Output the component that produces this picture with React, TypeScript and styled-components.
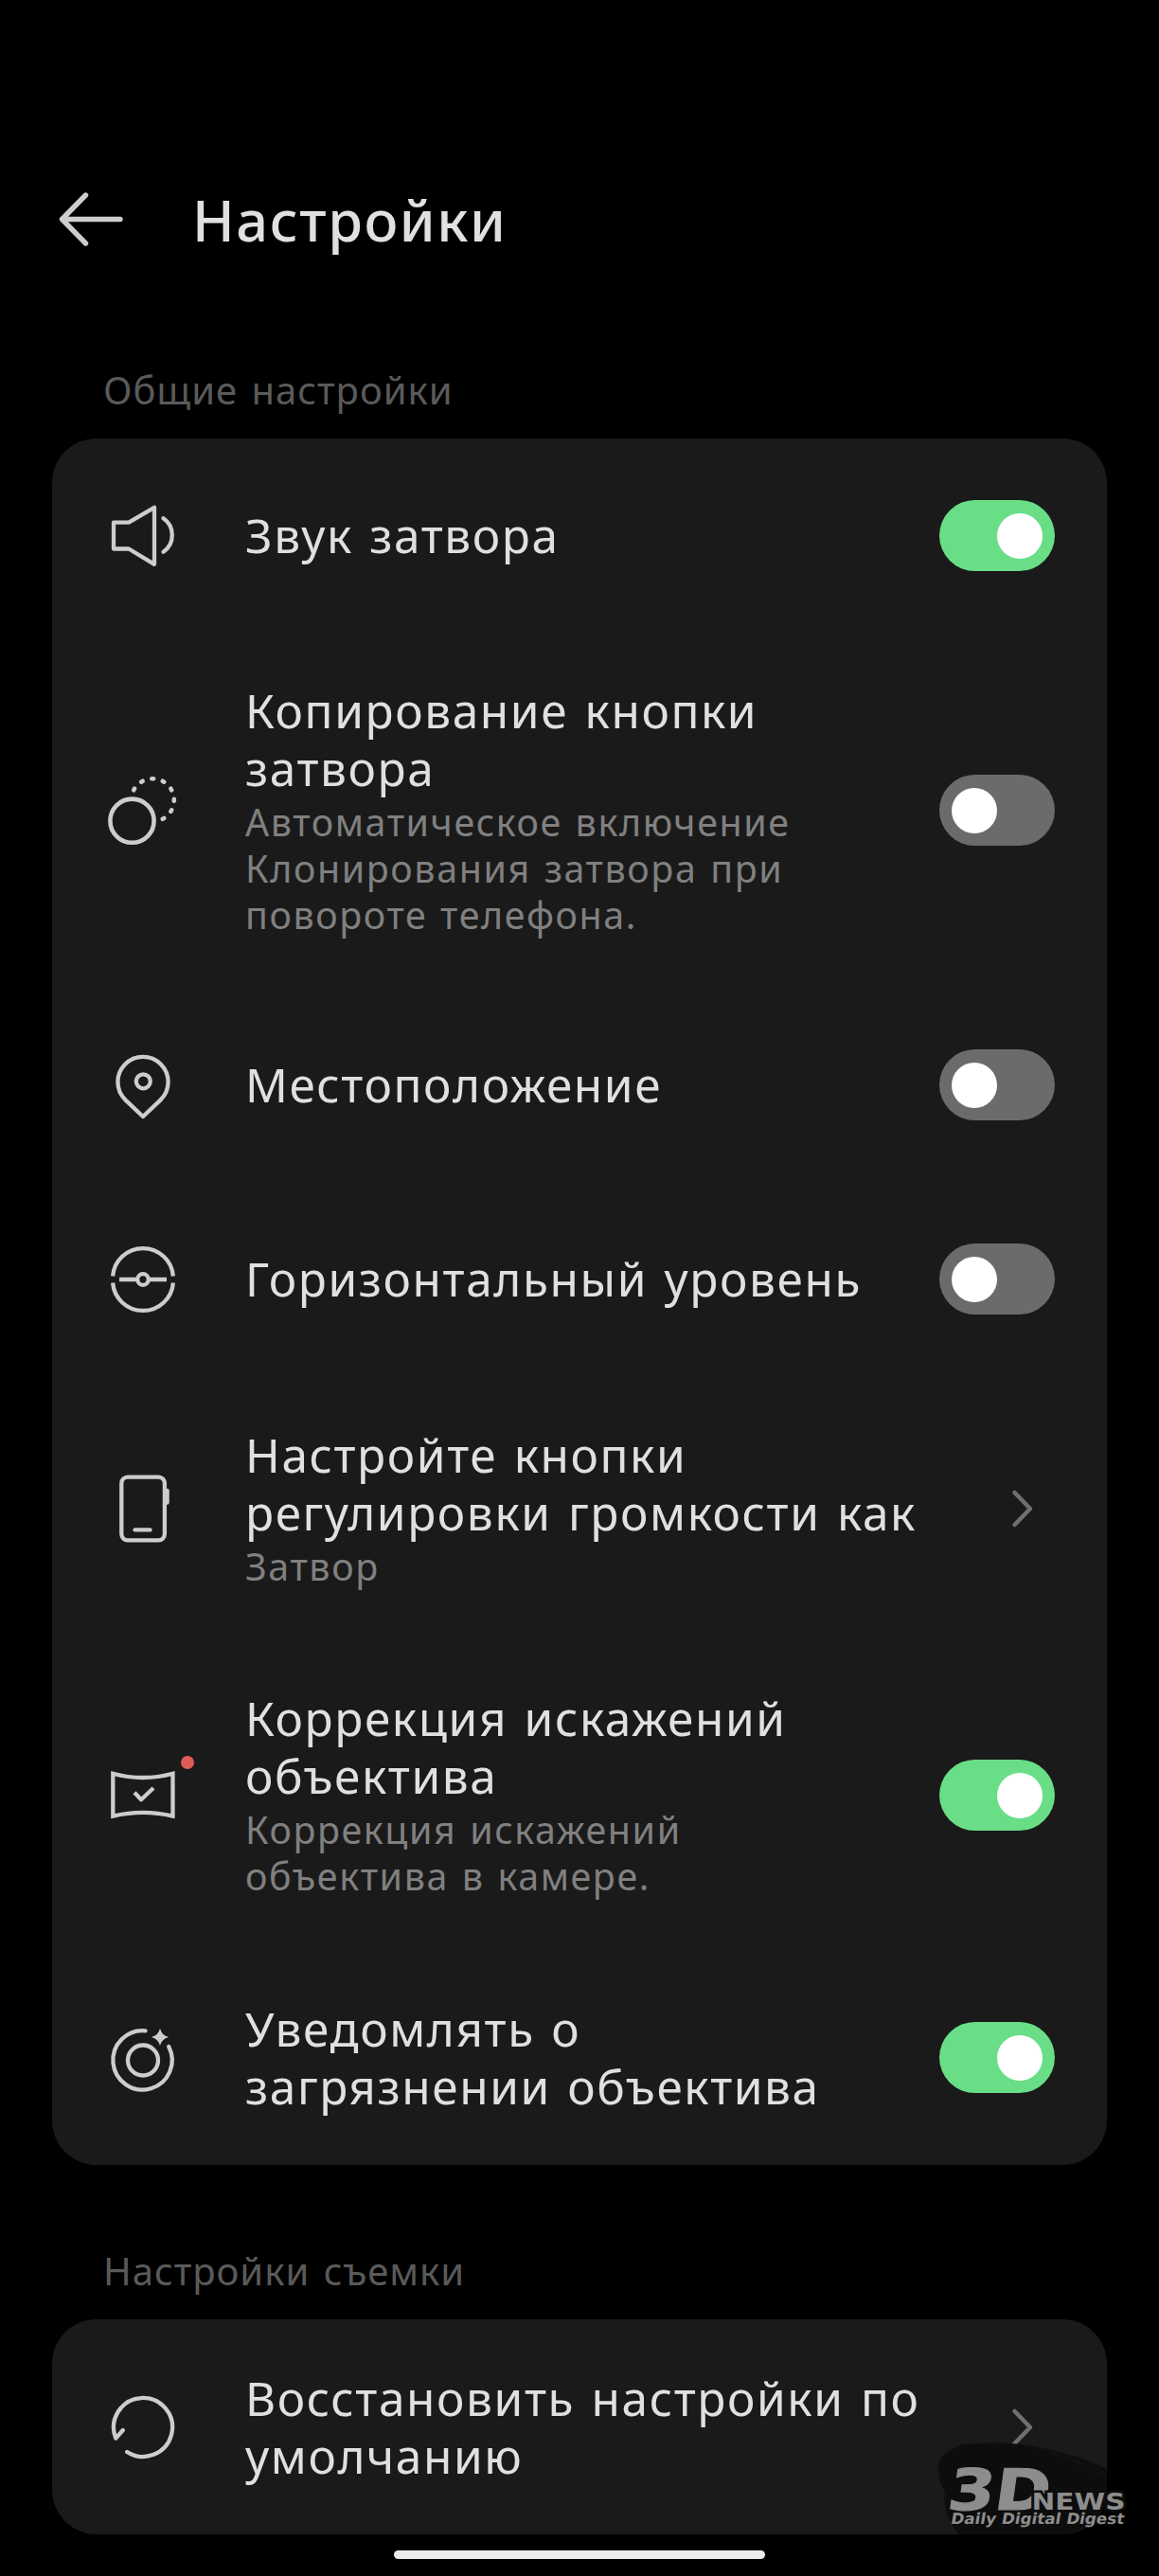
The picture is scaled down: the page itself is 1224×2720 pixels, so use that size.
import React, { useState } from 'react';
import styled, { createGlobalStyle } from 'styled-components';

const GlobalStyle = createGlobalStyle`
  *, *::before, *::after { box-sizing: border-box; }
  html, body { margin: 0; background: #000; }
`;

const Screen = styled.div`
  position: relative;
  width: 1224px;
  height: 2720px;
  overflow: hidden;
  display: flex;
  flex-direction: column;
  padding: 180px 55px 0;
  background: #000;
  color: #e0e0e0;
  font-family: 'Noto Sans', 'Open Sans', sans-serif;
`;

const Header = styled.header`
  display: flex;
  align-items: center;
  gap: 68px;
  height: 104px;
`;

const BackButton = styled.button`
  display: block;
  width: 80px;
  height: 80px;
  padding: 0;
  border: 0;
  background: none;
`;

const Title = styled.h1`
  margin: 0;
  font-size: 59.5px;
  line-height: 80px;
  font-weight: 500;
  letter-spacing: 1.6px;
`;

const SectionLabel = styled.h2<{ $top: number }>`
  margin: ${(p) => p.$top}px 0 24px;
  padding-left: 54px;
  font-size: 40px;
  line-height: 54px;
  font-weight: 400;
  letter-spacing: 1px;
  word-spacing: 3px;
  color: #5a5a5a;
`;

const Card = styled.section`
  display: flex;
  flex-direction: column;
  border-radius: 47px;
  background: #1a1a1a;
`;

const Row = styled.div<{ $height: number }>`
  display: flex;
  align-items: center;
  height: ${(p) => p.$height}px;
  padding: 0 55px 0 59px;
`;

const IconSlot = styled.div`
  position: relative;
  flex: none;
  width: 72px;
  height: 72px;
  margin-right: 73px;
`;

const IconSvg = styled.svg`
  display: block;
  width: 72px;
  height: 72px;
  fill: none;
  stroke: #cdcdcd;
  stroke-width: 4.3;
  stroke-linecap: round;
  stroke-linejoin: round;
`;

const NewDot = styled.span`
  position: absolute;
  top: -6px;
  left: 77px;
  width: 14px;
  height: 14px;
  border-radius: 50%;
  background: #de5b56;
`;

const Texts = styled.div`
  flex: 1;
  min-width: 0;
  white-space: nowrap;
`;

const RowTitle = styled.div`
  font-size: 49.5px;
  line-height: 61px;
  letter-spacing: 1.6px;
  word-spacing: 3px;
`;

const RowNote = styled.div`
  padding: 2px 0 1px;
  font-size: 39.4px;
  line-height: 49px;
  letter-spacing: 1.6px;
  word-spacing: 2px;
  color: #808080;
`;

const Line = styled.span`
  display: block;
`;

const Toggle = styled.button<{ $on: boolean }>`
  flex: none;
  display: flex;
  align-items: center;
  justify-content: ${(p) => (p.$on ? 'flex-end' : 'flex-start')};
  width: 122px;
  height: 75px;
  padding: 0 13px;
  border: 0;
  border-radius: 38px;
  background: ${(p) => (p.$on ? '#69de86' : '#6b6b6b')};
`;

const Knob = styled.span`
  width: 48px;
  height: 48px;
  border-radius: 50%;
  background: #fff;
`;

const Chevron = styled.svg`
  flex: none;
  width: 24px;
  height: 44px;
  margin-right: 22px;
  fill: none;
  stroke: #6f6f6f;
  stroke-width: 4.5;
  stroke-linecap: round;
  stroke-linejoin: round;
`;

const HomeBar = styled.div`
  align-self: center;
  width: 392px;
  height: 9px;
  margin-top: 17px;
  border-radius: 5px;
  background: #ebebeb;
`;

const Watermark = styled.svg`
  position: absolute;
  left: 984px;
  top: 2572px;
  width: 240px;
  height: 110px;
`;

const BackArrow = () => (
  <svg width="80" height="80" viewBox="0 0 80 80" fill="none" stroke="#cdcdcd" strokeWidth="5.4" strokeLinecap="round" strokeLinejoin="round">
    <path d="M35.5 14 L10.5 39.5 L35.5 65 M10.5 39.5 H72" />
  </svg>
);

const Icon = ({ children }: { children: React.ReactNode }) => (
  <IconSvg viewBox="-36 -36 72 72" overflow="visible">{children}</IconSvg>
);

const icons = {
  sound: (
    <Icon>
      <path d="M-30 -14.3 H-14 L13 -30.2 V29.8 L-14 13.5 H-30 Z" />
      <path d="M22.5 -18.7 A21.5 21.5 0 0 1 22.5 16.7" />
    </Icon>
  ),
  clone: (
    <Icon>
      <circle cx="-10.5" cy="10.7" r="23.1" strokeWidth="4.6" />
      {[-150, -120, -90, -60, -30, 0, 30, 60].map((deg) => (
        <path key={deg} d="M22.6 -0.9 V0.9" transform={`translate(11.2 -11.2) rotate(${deg})`} strokeWidth="4.6" />
      ))}
    </Icon>
  ),
  pin: (
    <Icon>
      <path d="M1 33 L-17.6 15.4 A26.6 26.6 0 1 1 19.6 15.4 Z" />
      <circle cx="1.3" cy="-4.2" r="7.5" />
    </Icon>
  ),
  level: (
    <Icon>
      <g strokeLinecap="butt">
        <path d="M-30.9 -3.5 A32 32 0 0 1 32.9 -3.5" />
        <path d="M-30.9 3.5 A32 32 0 0 0 32.9 3.5" />
        <path d="M-24 0 H-5 M7 0 H26" />
      </g>
      <circle cx="1" cy="0" r="5.8" />
    </Icon>
  ),
  phone: (
    <Icon>
      <rect x="-21.7" y="-33.3" width="45.6" height="66.6" rx="6.5" />
      <path d="M-7.5 22.4 H8.5" />
      <path d="M26.5 -19 V-6.5" strokeWidth="4.5" />
    </Icon>
  ),
  lens: (
    <Icon>
      <path d="M-30.7 -23.3 Q0.8 -14.7 32.5 -23.3 V21.6 Q0.8 14 -30.7 21.6 Z" strokeLinejoin="miter" />
      <path d="M-8 -3.2 L-0.9 4.2 L12 -8" strokeLinecap="butt" />
    </Icon>
  ),
  dirty: (
    <Icon>
      <path d="M3.6 -28.7 A31.2 31.2 0 1 0 28.2 -12.1" />
      <circle cx="1" cy="2.5" r="16" />
      <path d="M19 -31.3 Q20.8 -23.7 28.2 -22.1 Q20.8 -20.3 19 -12.9 Q17.2 -20.3 9.8 -22.1 Q17.2 -23.7 19 -31.3 Z" fill="#cdcdcd" stroke="none" />
    </Icon>
  ),
  reset: (
    <Icon>
      <path d="M-15.8 26 A31 31 0 1 0 -27.7 11.6 L-20.2 3" />
    </Icon>
  ),
};

type Item = {
  icon: keyof typeof icons;
  height: number;
  title: string[];
  note?: string[];
  on?: boolean;
  badge?: boolean;
};

const general: Item[] = [
  { icon: 'sound', height: 205, title: ['Звук затвора'], on: true },
  {
    icon: 'clone',
    height: 375,
    title: ['Копирование кнопки', 'затвора'],
    note: ['Автоматическое включение', 'Клонирования затвора при', 'повороте телефона.'],
    on: false,
  },
  { icon: 'pin', height: 205, title: ['Местоположение'], on: false },
  { icon: 'level', height: 205, title: ['Горизонтальный уровень'], on: false },
  { icon: 'phone', height: 279, title: ['Настройте кнопки', 'регулировки громкости как'], note: ['Затвор'] },
  {
    icon: 'lens',
    height: 327,
    title: ['Коррекция искажений', 'объектива'],
    note: ['Коррекция искажений', 'объектива в камере.'],
    on: true,
    badge: true,
  },
  { icon: 'dirty', height: 227, title: ['Уведомлять о', 'загрязнении объектива'], on: true },
];

const shooting: Item[] = [{ icon: 'reset', height: 227, title: ['Восстановить настройки по', 'умолчанию'] }];

const SettingRow = ({ item }: { item: Item }) => {
  const [on, setOn] = useState(!!item.on);
  return (
    <Row $height={item.height}>
      <IconSlot>
        {icons[item.icon]}
        {item.badge && <NewDot />}
      </IconSlot>
      <Texts>
        <RowTitle>{item.title.map((t) => <Line key={t}>{t}</Line>)}</RowTitle>
        {item.note && <RowNote>{item.note.map((t) => <Line key={t}>{t}</Line>)}</RowNote>}
      </Texts>
      {item.on === undefined ? (
        <Chevron viewBox="0 0 24 44">
          <path d="M3.5 5 L20 22 L3.5 39" />
        </Chevron>
      ) : (
        <Toggle $on={on} role="switch" aria-checked={on} onClick={() => setOn(!on)}>
          <Knob />
        </Toggle>
      )}
    </Row>
  );
};

const Logo = () => (
  <Watermark viewBox="0 0 240 110">
    <path
      d="M30 10.5 Q26 8.5 46 8.2 Q82 6 113 12 Q160 22 185 35 V65 Q178 86 160 97 Q150 103 141 104 H28 L18 87 Q12 76 14 60 Q6 46 7 30 Q10 18 26 12 Z"
      fill="#0d0d0d"
    />
    <path d="M112 13 Q150 22 185 41 M126 19 Q160 28 185 45" fill="none" stroke="#151515" strokeWidth="1.2" strokeDasharray="7 2 3 2" />
    <g fill="#8d8d8d" fontFamily="'DejaVu Sans', sans-serif" fontWeight="700">
      <text transform="translate(15 77.5) skewX(-8)" fontSize="60" textLength="108" lengthAdjust="spacingAndGlyphs" stroke="#8d8d8d" strokeWidth="1.2">3D</text>
      <text x="105.5" y="78" fontSize="24" textLength="99" lengthAdjust="spacingAndGlyphs" stroke="#0d0d0d" strokeWidth="5" paintOrder="stroke">NEWS</text>
      <text transform="translate(19.5 92.5) skewX(-10)" fontSize="16" textLength="183" lengthAdjust="spacingAndGlyphs">Daily Digital Digest</text>
    </g>
  </Watermark>
);

export default function App() {
  return (
    <Screen>
      <GlobalStyle />
      <Header>
        <BackButton aria-label="Назад"><BackArrow /></BackButton>
        <Title>Настройки</Title>
      </Header>
      <SectionLabel $top={101}>Общие настройки</SectionLabel>
      <Card>{general.map((item) => <SettingRow key={item.icon} item={item} />)}</Card>
      <SectionLabel $top={85}>Настройки съемки</SectionLabel>
      <Card>{shooting.map((item) => <SettingRow key={item.icon} item={item} />)}</Card>
      <HomeBar />
      <Logo />
    </Screen>
  );
}
